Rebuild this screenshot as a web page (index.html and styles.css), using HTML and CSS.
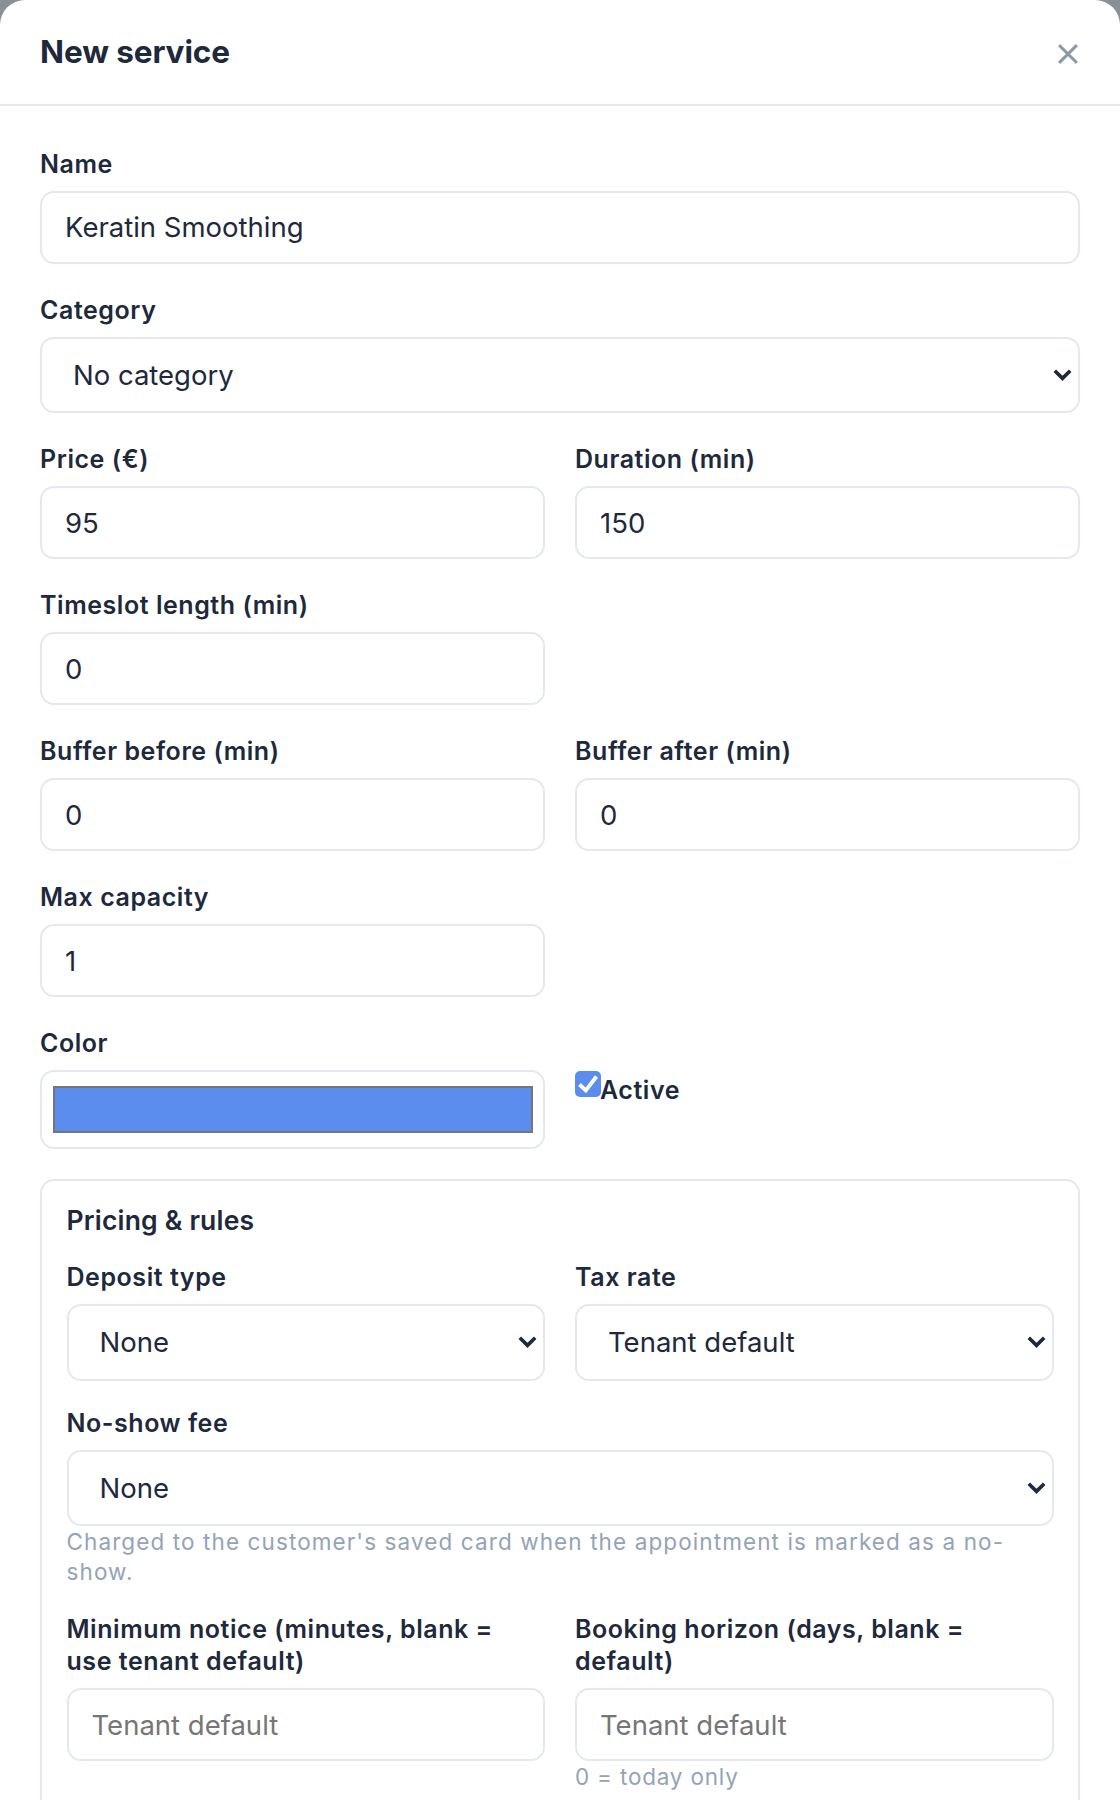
FILE: index.html
```html
<!DOCTYPE html>
<html lang="en">
<head>
<meta charset="utf-8">
<title>New service</title>
<link rel="stylesheet" href="styles.css">
</head>
<body>
<div class="modal">
  <header class="modal-head">
    <h2 class="title">New service</h2>
    <button class="close" type="button" aria-label="Close">
      <svg width="20" height="20" viewBox="0 0 20 20"><path d="M2.2 2.2 L17.8 17.8 M17.8 2.2 L2.2 17.8" stroke="#8c98a5" stroke-width="3" stroke-linecap="square" fill="none"/></svg>
    </button>
  </header>
  <div class="modal-body">
    <div class="field">
      <label class="label">Name</label>
      <input class="input" type="text" value="Keratin Smoothing">
    </div>
    <div class="field">
      <label class="label">Category</label>
      <div class="select-wrap">
        <select class="select"><option>No category</option></select>
        <svg class="chev" width="19" height="12" viewBox="0 0 19 12"><polyline points="1.8,1.8 9.5,9.4 17.2,1.8" fill="none" stroke="#1e293b" stroke-width="3.6"/></svg>
      </div>
    </div>
    <div class="row">
      <div class="field">
        <label class="label">Price (€)</label>
        <input class="input" type="text" value="95">
      </div>
      <div class="field">
        <label class="label">Duration (min)</label>
        <input class="input" type="text" value="150">
      </div>
    </div>
    <div class="row">
      <div class="field">
        <label class="label">Timeslot length (min)</label>
        <input class="input" type="text" value="0">
      </div>
    </div>
    <div class="row">
      <div class="field">
        <label class="label">Buffer before (min)</label>
        <input class="input" type="text" value="0">
      </div>
      <div class="field">
        <label class="label">Buffer after (min)</label>
        <input class="input" type="text" value="0">
      </div>
    </div>
    <div class="row">
      <div class="field">
        <label class="label">Max capacity</label>
        <input class="input" type="text" value="1">
      </div>
    </div>
    <div class="row">
      <div class="field">
        <label class="label">Color</label>
        <div class="color-box"><div class="swatch"></div></div>
      </div>
      <div class="active-col">
        <label class="check-label"><span class="checkbox"><svg width="26" height="26" viewBox="0 0 26 26"><polyline points="4.5,13.5 10.8,19.5 21.5,5.5" fill="none" stroke="#fff" stroke-width="3.8"/></svg></span>Active</label>
      </div>
    </div>
    <section class="panel">
      <h3 class="panel-title">Pricing &amp; rules</h3>
      <div class="row inner">
        <div class="field">
          <label class="label">Deposit type</label>
          <div class="select-wrap">
            <select class="select"><option>None</option></select>
            <svg class="chev" width="19" height="12" viewBox="0 0 19 12"><polyline points="1.8,1.8 9.5,9.4 17.2,1.8" fill="none" stroke="#1e293b" stroke-width="3.6"/></svg>
          </div>
        </div>
        <div class="field">
          <label class="label">Tax rate</label>
          <div class="select-wrap">
            <select class="select"><option>Tenant default</option></select>
            <svg class="chev" width="19" height="12" viewBox="0 0 19 12"><polyline points="1.8,1.8 9.5,9.4 17.2,1.8" fill="none" stroke="#1e293b" stroke-width="3.6"/></svg>
          </div>
        </div>
      </div>
      <div class="field">
        <label class="label">No-show fee</label>
        <div class="select-wrap">
          <select class="select"><option>None</option></select>
          <svg class="chev" width="19" height="12" viewBox="0 0 19 12"><polyline points="1.8,1.8 9.5,9.4 17.2,1.8" fill="none" stroke="#1e293b" stroke-width="3.6"/></svg>
        </div>
        <p class="help">Charged to the customer's saved card when the appointment is marked as a no-show.</p>
      </div>
      <div class="row inner">
        <div class="field">
          <label class="label">Minimum notice (minutes, blank = use tenant default)</label>
          <input class="input" type="text" placeholder="Tenant default">
        </div>
        <div class="field">
          <label class="label">Booking horizon (days, blank = default)</label>
          <input class="input" type="text" placeholder="Tenant default">
          <p class="help hint">0 = today only</p>
        </div>
      </div>
    </section>
  </div>
</div>
</body>
</html>
```

FILE: styles.css
```css
* {
  box-sizing: border-box;
}

html, body {
  margin: 0;
  padding: 0;
}

body {
  background: #8b9098;
  font-family: Inter, "Noto Sans", "Liberation Sans", sans-serif;
  color: #1e293b;
}

.modal {
  background: #ffffff;
  border-radius: 25px 25px 0 0;
  width: 1120px;
  min-height: 1800px;
}

.modal-head {
  height: 106px;
  border-bottom: 2px solid #e5e9ef;
  display: flex;
  align-items: center;
  justify-content: space-between;
  padding: 0 42px 0 40px;
}

.title {
  margin: 0;
  font-size: 31.5px;
  font-weight: 700;
  line-height: 40px;
  color: #1e293b;
  letter-spacing: -0.1px;
}

.close {
  border: 0;
  background: none;
  padding: 0;
  margin-top: 4px;
  width: 20px;
  height: 20px;
  display: flex;
}

.modal-body {
  padding: 41.5px 40px 0;
  display: flex;
  flex-direction: column;
  gap: 30px;
}

.field {
  display: flex;
  flex-direction: column;
  min-width: 0;
}

.label {
  display: block;
  font-size: 25px;
  font-weight: 600;
  line-height: 32px;
  letter-spacing: 0.55px;
  margin-bottom: 11px;
  color: #1e293b;
}

.input {
  height: 73px;
  width: 100%;
  border: 2px solid #e4e9f0;
  border-radius: 14px;
  padding: 0 23px;
  font-family: inherit;
  font-size: 27.5px;
  color: #1e293b;
  background: #ffffff;
  outline: none;
}

.input::placeholder {
  color: #767676;
  opacity: 1;
}

.select-wrap {
  position: relative;
}

.select {
  appearance: none;
  -webkit-appearance: none;
  width: 100%;
  height: 76.5px;
  border: 2px solid #e4e9f0;
  border-radius: 14px;
  padding: 0 40px 0 31px;
  font-family: inherit;
  font-size: 27.5px;
  color: #1e293b;
  background: #ffffff;
  outline: none;
}

.chev {
  position: absolute;
  right: 8px;
  top: 50%;
  margin-top: -6px;
  pointer-events: none;
}

.row {
  display: grid;
  grid-template-columns: 1fr 1fr;
  column-gap: 30px;
  align-items: start;
}

.color-box {
  border: 2px solid #e4e9f0;
  border-radius: 14px;
  padding: 13.5px 10.5px;
  background: #ffffff;
}

.swatch {
  height: 47.5px;
  background: #5b8def;
  border: 2px solid #767676;
}

.active-col {
  padding-top: 44px;
}

.check-label {
  font-size: 25px;
  font-weight: 600;
  line-height: 32px;
  letter-spacing: 0.55px;
  color: #1e293b;
}

.checkbox {
  display: inline-block;
  width: 26px;
  height: 26px;
  background: #5b8def;
  border-radius: 5px;
  vertical-align: 2px;
  margin-right: -1px;
}

.checkbox svg {
  display: block;
}

.panel {
  border: 2px solid #e4e9f0;
  border-radius: 14px;
  padding: 24.5px;
  display: flex;
  flex-direction: column;
  gap: 26px;
}

.panel-title {
  margin: 0;
  font-size: 26.5px;
  font-weight: 600;
  line-height: 30px;
  letter-spacing: 0.2px;
  color: #1e293b;
}

.help {
  margin: 1px 0 0;
  font-size: 22.5px;
  line-height: 30px;
  letter-spacing: 1.1px;
  color: #94a3b8;
}

.hint {
  letter-spacing: 0.8px;
}
```
